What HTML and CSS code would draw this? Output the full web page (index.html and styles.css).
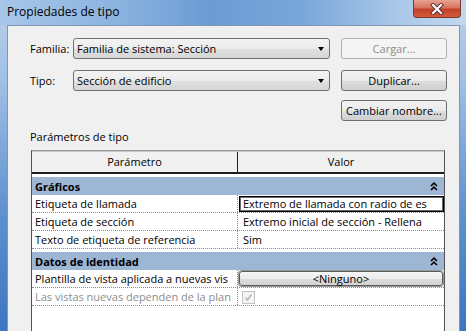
FILE: index.html
```html
<!DOCTYPE html>
<html lang="es">
<head>
    <meta charset="UTF-8">
    <title>Propiedades de tipo</title>
    <link rel="stylesheet" href="styles.css">
</head>
<body>
    <div class="window">
        <div class="titlebar">
            <span class="title">Propiedades de tipo</span>
            <div class="close-button">
                <svg width="14" height="12" viewBox="0 0 14 12">
                    <path d="M3 2 L11 10 M11 2 L3 10" stroke="#5a2a24" stroke-width="4" stroke-linecap="square"/>
                    <path d="M3 2 L11 10 M11 2 L3 10" stroke="#ffffff" stroke-width="2.2" stroke-linecap="square"/>
                </svg>
            </div>
        </div>

        <div class="client">
            <div class="form-row">
                <span class="label">Familia:</span>
                <div class="combo">Familia de sistema: Sección<span class="arrow"></span></div>
                <button class="btn btn-disabled">Cargar...</button>
            </div>
            <div class="form-row second">
                <span class="label">Tipo:</span>
                <div class="combo">Sección de edificio<span class="arrow"></span></div>
                <button class="btn">Duplicar...</button>
            </div>
            <div class="form-row third">
                <span></span>
                <span></span>
                <button class="btn">Cambiar nombre...</button>
            </div>

            <div class="section-label">Parámetros de tipo</div>

            <div class="param-table">
                <div class="table-head">
                    <div class="head-cell">Parámetro</div>
                    <div class="head-cell">Valor</div>
                </div>
                <div class="table-body">
                    <div class="group-row">
                        <span>Gráficos</span>
                        <svg class="chevron" width="8" height="9" viewBox="0 0 8 9">
                            <path d="M1 4 L4 1.2 L7 4 M1 8 L4 5.2 L7 8" stroke="#000" stroke-width="1.6" fill="none"/>
                        </svg>
                    </div>
                    <div class="data-row">
                        <div class="name-cell">Etiqueta de llamada</div>
                        <div class="value-cell"><div class="edit-box">Extremo de llamada con radio de es</div></div>
                    </div>
                    <div class="data-row">
                        <div class="name-cell">Etiqueta de sección</div>
                        <div class="value-cell">Extremo inicial de sección - Rellena</div>
                    </div>
                    <div class="data-row">
                        <div class="name-cell">Texto de etiqueta de referencia</div>
                        <div class="value-cell">Sim</div>
                    </div>

                    <div class="group-row">
                        <span>Datos de identidad</span>
                        <svg class="chevron" width="8" height="9" viewBox="0 0 8 9">
                            <path d="M1 4 L4 1.2 L7 4 M1 8 L4 5.2 L7 8" stroke="#000" stroke-width="1.6" fill="none"/>
                        </svg>
                    </div>
                    <div class="data-row">
                        <div class="name-cell">Plantilla de vista aplicada a nuevas vis</div>
                        <div class="value-cell"><div class="cell-button">&lt;Ninguno&gt;</div></div>
                    </div>
                    <div class="data-row">
                        <div class="name-cell muted">Las vistas nuevas dependen de la plan</div>
                        <div class="value-cell">
                            <span class="checkbox">
                                <svg width="9" height="9" viewBox="0 0 9 9">
                                    <path d="M1.5 4.5 L3.5 7 L7.5 1.5" stroke="#b4b4b4" stroke-width="1.4" fill="none"/>
                                </svg>
                            </span>
                        </div>
                    </div>
                </div>
            </div>
        </div>
    </div>
</body>
</html>
```

FILE: styles.css
```css
body {
    margin: 0;
    width: 466px;
    height: 331px;
    overflow: hidden;
    font-family: "Open Sans", "Liberation Sans", sans-serif;
    font-size: 11px;
    color: #000;
}
.window {
    height: 331px;
    display: flex;
    flex-direction: column;
    background: linear-gradient(180deg, #b9d0ea 0%, #9fbfe4 25%, #5d90cf 65%, #3c76c0 100%);
}
.titlebar {
    height: 25px;
    flex-shrink: 0;
    display: flex;
    justify-content: space-between;
    align-items: flex-start;
    padding-left: 7px;
    background: linear-gradient(90deg, #a7c6e9 0%, #8cb3df 25%, #6b9bd5 45%, #7aa7da 65%, #a9c7e8 85%, #c3d7ee 100%);
}
.title {
    font-size: 12px;
    line-height: 14px;
    padding-top: 5px;
}
.close-button {
    width: 46px;
    height: 17px;
    margin-right: 5px;
    border: 1px solid #7a3a30;
    border-top: none;
    border-radius: 0 0 4px 4px;
    background: linear-gradient(180deg, #e8a393 0%, #d6735e 45%, #c2412a 55%, #d55a3c 100%);
    display: flex;
    align-items: center;
    justify-content: center;
}
.client {
    flex: 1;
    min-height: 0;
    display: flex;
    flex-direction: column;
    margin: 0 6px 0 7px;
    border: 1px solid #8296b2;
    border-bottom: none;
    background: #f0f0f0;
    padding: 12px 0 0 22px;
}
.form-row {
    display: grid;
    grid-template-columns: 43px 268px 106px;
    height: 21px;
    align-items: center;
    flex-shrink: 0;
}
.form-row.second {
    margin-top: 11px;
}
.form-row.third {
    margin-top: 9px;
}
.label {
    line-height: 21px;
}
.combo {
    position: relative;
    height: 19px;
    margin-right: 11px;
    line-height: 19px;
    padding-left: 3px;
    border: 1px solid #707070;
    border-radius: 3px;
    background: linear-gradient(180deg, #f3f3f3 0%, #ececec 50%, #dfdfdf 51%, #d6d6d6 100%);
}
.arrow {
    position: absolute;
    right: 5px;
    top: 8px;
    border-left: 3.5px solid transparent;
    border-right: 3.5px solid transparent;
    border-top: 4px solid #000;
}
.btn {
    height: 21px;
    padding: 0;
    font-family: inherit;
    font-size: 11px;
    color: #000;
    border: 1px solid #707070;
    border-radius: 3px;
    background: linear-gradient(180deg, #f2f2f2 0%, #ebebeb 50%, #dddddd 51%, #cfcfcf 100%);
}
.btn-disabled {
    color: #8a8a8a;
    border-color: #adb2b5;
    background: #f4f4f4;
}
.section-label {
    margin-top: 9px;
    line-height: 14px;
}
.param-table {
    flex: 1;
    min-height: 0;
    margin-top: 6px;
    margin-left: 1px;
    width: 412px;
    border-left: 1px solid #555;
    border-right: 1px solid #555;
    border-top: 1px solid #9a9a9a;
    background: #fff;
}
.table-head {
    display: grid;
    grid-template-columns: 205px 1fr;
    height: 20px;
    background: #f0f0f0;
    border-top: 1px solid #c8c8c8;
    border-bottom: 2px solid #1e1e1e;
}
.head-cell {
    text-align: center;
    line-height: 20px;
}
.head-cell + .head-cell {
    border-left: 1px solid #1e1e1e;
}
.table-body {
    padding-top: 3px;
}
.group-row {
    display: flex;
    justify-content: space-between;
    align-items: center;
    height: 18px;
    padding: 0 6px 0 3px;
    background: #9cb6d4;
    font-weight: bold;
}
.data-row + .group-row {
    margin-top: 3px;
}
.data-row {
    display: grid;
    grid-template-columns: 205px 1fr;
    height: 17px;
    border-bottom: 1px dotted #8c8c8c;
}
.name-cell {
    padding-left: 3px;
    line-height: 17px;
    white-space: nowrap;
    overflow: hidden;
}
.name-cell.muted {
    color: #8d8d8d;
}
.value-cell {
    border-left: 1px dotted #8c8c8c;
    padding-left: 5px;
    line-height: 17px;
    white-space: nowrap;
    overflow: hidden;
}
.edit-box {
    margin: 1px 0 0 -4px;
    height: 14px;
    line-height: 14px;
    padding-left: 3px;
    border: 1px solid #000;
    box-shadow: inset 0 0 0 1px #6a6a6a;
}
.cell-button {
    margin: 1px 1px 0 -4px;
    height: 13px;
    line-height: 13px;
    text-align: center;
    border: 1px solid #5c5c5c;
    border-radius: 3px;
    background: linear-gradient(180deg, #f6f6f6 0%, #ececec 50%, #dedede 51%, #d3d3d3 100%);
    box-shadow: 0 0 0 1px #9a9a9a;
}
.checkbox {
    display: inline-flex;
    align-items: center;
    justify-content: center;
    width: 11px;
    height: 11px;
    margin: 3px 0 0 -1px;
    border: 1px solid #c2c2c2;
    background: #f4f4f4;
    vertical-align: top;
}
```
